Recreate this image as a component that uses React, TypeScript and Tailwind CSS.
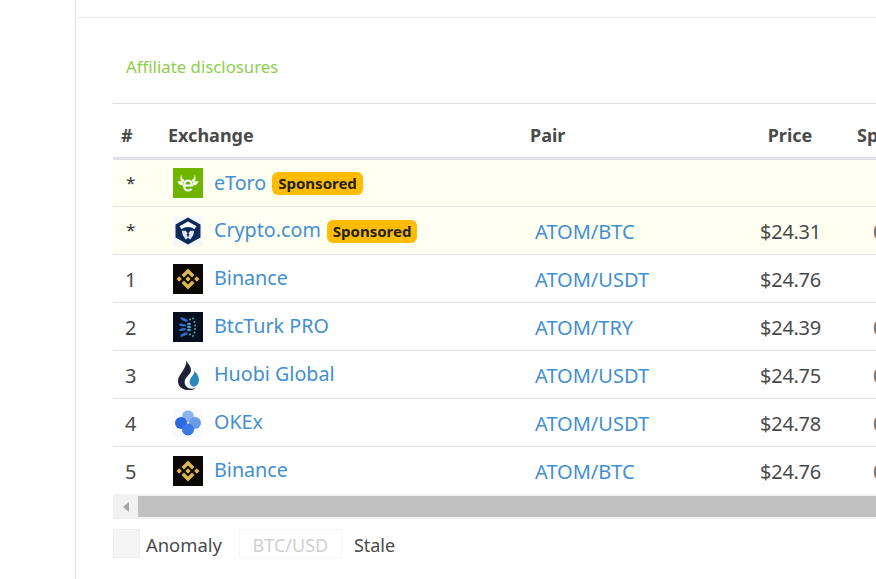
import React from "react";

const Etoro = () => (
  <svg width="30" height="30" viewBox="0 0 30 30" className="block shrink-0">
    <rect width="30" height="30" fill="#6fb500" />
    <path d="M8.500 6.500c-.3 2.600.6 4.300 3 5.400l-1.300 2.300C7.300 13 6.300 10 8.500 6.500zM21.500 6.500c.3 2.600-.6 4.300-3 5.400l1.300 2.300c2.900-1.200 3.900-4.200 1.700-7.700z" fill="#eef8e0" />
    <path d="M4.500 13.500c2-.9 4-.7 5.500.6v3.400c-2.500.2-4.500-1.400-5.500-4zM25.500 13.500c-2-.9-4-.7-5.500.6v3.400c2.500.2 4.500-1.400 5.500-4z" fill="#f4fbe9" />
    <path d="M11.200 17.500h7.600c0-3-1.500-5-3.800-5s-3.800 2-3.800 5 1.600 5 3.900 5c1.400 0 2.600-.6 3.400-1.700" fill="none" stroke="#fff" strokeWidth="2.200" />
  </svg>
);

const Crypto = () => (
  <svg width="30" height="30" viewBox="0 0 30 30" className="block shrink-0">
    <rect width="30" height="30" fill="#f6f8fc" />
    <path d="M15 1.500L27.500 8.500v13L15 28.500 2.500 21.500v-13z" fill="#0c2a5b" />
    <path d="M15 5.500l8.500 4.800-2.200 3c-1.600-1.500-3.700-2.300-6.300-2.300s-4.700.8-6.300 2.300l-2.200-3z" fill="#fff" />
    <path d="M8.800 14.800h3.800l2 2.400-1 1.300 1.600 3.300-2.500 1.800-3-4.500zM21.200 14.800h-3.800l-2 2.400 1 1.300-1.600 3.300 2.500 1.800 3-4.500z" fill="#dfe6f3" />
  </svg>
);

const Binance = () => (
  <svg width="30" height="30" viewBox="0 0 30 30" className="block shrink-0">
    <rect width="30" height="30" fill="#0b0805" />
    <g fill="#dcb554">
      <path d="M15 4.500l6.500 6.500-2.500 2.500L15 9.500l-4 4L8.500 11z" />
      <path d="M15 25.500L8.500 19l2.500-2.500 4 4 4-4 2.500 2.500z" />
      <rect x="4.300" y="13.100" width="3.800" height="3.800" transform="rotate(45 6.200 15)" />
      <rect x="21.900" y="13.100" width="3.800" height="3.800" transform="rotate(45 23.800 15)" />
      <rect x="13.100" y="13.100" width="3.800" height="3.800" transform="rotate(45 15 15)" />
    </g>
  </svg>
);

const BtcTurk = () => (
  <svg width="30" height="30" viewBox="0 0 30 30" className="block shrink-0">
    <rect width="30" height="30" fill="#08101f" />
    <g fill="#2c6fd0">
      <ellipse cx="11" cy="7.500" rx="4" ry="1.400" transform="rotate(25 11 7.500)" />
      <ellipse cx="11" cy="22.500" rx="4" ry="1.400" transform="rotate(-25 11 22.500)" />
      <ellipse cx="9.500" cy="13" rx="3.500" ry="1.400" transform="rotate(12 9.500 13)" />
      <ellipse cx="9.500" cy="17.500" rx="3.500" ry="1.400" transform="rotate(-12 9.500 17.500)" />
    </g>
    <g fill="#37a6cf">
      <ellipse cx="16" cy="12" rx="2" ry="1.200" />
      <ellipse cx="16" cy="15" rx="2" ry="1.200" />
      <ellipse cx="16" cy="18" rx="2" ry="1.200" />
      <circle cx="17" cy="7.500" r="1" />
      <circle cx="17" cy="22.500" r="1" />
    </g>
    <g fill="#3ec0b4">
      <circle cx="20" cy="6.500" r=".9" />
      <circle cx="21.500" cy="10" r=".9" />
      <circle cx="22" cy="13.500" r=".9" />
      <circle cx="22" cy="17" r=".9" />
      <circle cx="21.500" cy="20.500" r=".9" />
      <circle cx="20" cy="24" r=".9" />
    </g>
  </svg>
);

const Huobi = () => (
  <svg width="30" height="30" viewBox="0 0 30 30" className="block shrink-0">
    <rect width="30" height="30" fill="#fff" />
    <path d="M13.500 0c.5 3.500 4.500 5.500 4.500 10 0 4-4.500 6-6 10-1 3 0 6 3 8 2.500 1.200 5.500 1 8-.5-1.500 2-4.500 3-7.500 2.800C9.500 30 5 26.500 5 21c0-7 8.500-11 8.500-21z" fill="#1b2138" />
    <path d="M21.500 11c2.500 2.500 4.500 5.500 4.500 9 0 3.800-2.400 6.200-5.500 6.800-2.500-.6-4.200-2.700-3.900-5.500.4-3.700 4.500-5.800 4.900-10.300z" fill="#2a86bd" />
  </svg>
);

const Okex = () => (
  <svg width="30" height="30" viewBox="0 0 30 30" className="block shrink-0">
    <rect width="30" height="30" fill="#f8fafe" />
    <circle cx="15" cy="8.500" r="6" fill="#8db4ef" />
    <circle cx="22" cy="15" r="6" fill="#6a9bea" />
    <circle cx="8" cy="15" r="6" fill="#2a68e0" />
    <circle cx="15" cy="21.500" r="6" fill="#3c78e4" />
  </svg>
);

const Sponsored = () => (
  <span className="ml-[6px] inline-flex h-[23px] translate-y-[1px] items-center rounded-[6px] bg-[#ffbc00] px-[6px] text-[15px] font-bold text-[#212121]">
    Sponsored
  </span>
);

type Row = { rank: string; icon: React.ReactNode; name: string; sponsored?: boolean; pair?: string; price?: string; spread?: string };

const rows: Row[] = [
  { rank: "*", icon: <Etoro />, name: "eToro", sponsored: true },
  { rank: "*", icon: <Crypto />, name: "Crypto.com", sponsored: true, pair: "ATOM/BTC", price: "$24.31", spread: "0" },
  { rank: "1", icon: <Binance />, name: "Binance", pair: "ATOM/USDT", price: "$24.76" },
  { rank: "2", icon: <BtcTurk />, name: "BtcTurk PRO", pair: "ATOM/TRY", price: "$24.39", spread: "0" },
  { rank: "3", icon: <Huobi />, name: "Huobi Global", pair: "ATOM/USDT", price: "$24.75", spread: "0" },
  { rank: "4", icon: <Okex />, name: "OKEx", pair: "ATOM/USDT", price: "$24.78", spread: "0" },
  { rank: "5", icon: <Binance />, name: "Binance", pair: "ATOM/BTC", price: "$24.76", spread: "0" },
];

export default function App() {
  return (
    <div className="flex h-[579px] w-[876px] overflow-hidden bg-white font-['Noto_Sans','Open_Sans',sans-serif] text-[#4a4a4a]">
      <aside className="w-[76px] shrink-0 border-r border-[#e2e2e2]" />
      <main className="flex min-w-0 flex-1 flex-col pl-px">
        <div className="h-[18px] shrink-0 border-b border-[#e8e8e8]" />
        <div className="flex min-w-0 flex-1 flex-col pl-[36px]">
          <div className="flex h-[86px] shrink-0 items-center border-b border-[#e2e2e2] pl-[13px] pt-[13px]">
            <a className="text-[16.8px] text-[#8ccf4d]">Affiliate disclosures</a>
          </div>
          <div className="overflow-hidden">
            <table className="w-[886px] table-fixed border-collapse">
              <colgroup>
                <col className="w-[47px]" />
                <col className="w-[362px]" />
                <col className="w-[209px]" />
                <col className="w-[118px]" />
                <col className="w-[150px]" />
              </colgroup>
              <thead>
                <tr className="h-[54px] border-b-[3px] border-[#dfdfe4] text-[18px] font-bold text-[#4a4a4a]">
                  <th className="px-2 pt-[10px] text-left font-bold">#</th>
                  <th className="px-2 pt-[10px] text-left font-bold">Exchange</th>
                  <th className="px-2 pt-[10px] text-left font-bold">Pair</th>
                  <th className="px-2 pt-[10px] text-center font-bold">Price</th>
                  <th className="px-2 pt-[10px] text-left font-bold">Spread</th>
                </tr>
              </thead>
              <tbody className="text-[20px]">
                {rows.map((r, i) => (
                  <tr
                    key={i}
                    className={`h-[48px] ${i < rows.length - 1 ? "border-b border-[#e2e2e2]" : ""} ${r.sponsored ? "bg-[#fffff2]" : ""}`}
                  >
                    <td className={r.rank === "*" ? "pl-[13px] align-middle text-[17px] text-[#363636]" : "pl-[12px] pt-[4px] align-middle"}>{r.rank}</td>
                    <td className="pl-[13px] align-middle">
                      <div className="flex items-center">
                        <div className={i === 0 ? "" : "translate-y-[1px]"}>{r.icon}</div>
                        <a className="ml-[11px] text-[19.7px] text-[#428fd0]">{r.name}</a>
                        {r.sponsored && <Sponsored />}
                      </div>
                    </td>
                    <td className="pl-[13px] pt-[4px] align-middle text-[#428fd0]">{r.pair}</td>
                    <td className="pl-px pt-[4px] text-center align-middle tracking-[-0.3px]">{r.price}</td>
                    <td className="pl-[24px] pt-[4px] align-middle text-[#666666]">{r.spread}</td>
                  </tr>
                ))}
              </tbody>
            </table>
          </div>
          <div className="flex h-[25px] shrink-0 items-stretch bg-[#f1f1f1] py-[2px]">
            <div className="flex w-[25px] shrink-0 items-center justify-center">
              <div className="h-0 w-0 border-y-[5px] border-r-[6px] border-y-transparent border-r-[#a3a3a3]" />
            </div>
            <div className="flex-1 bg-[#c1c1c1]" />
          </div>
          <div className="mt-[10px] flex h-[29px] items-center text-[18px]">
            <div className="h-[29px] w-[27px] border border-[#eeeeee] bg-[#f5f5f5]" />
            <span className="ml-[6px] pt-[3px] text-[18.4px] text-[#4a4a4a]">Anomaly</span>
            <div className="ml-[17px] flex h-[29px] w-[103px] items-center justify-center border border-[#f5f5f5] pt-[3px] text-[#d0d0d0]">BTC/USD</div>
            <span className="ml-[12px] pt-[3px] text-[#4a4a4a]">Stale</span>
          </div>
        </div>
      </main>
    </div>
  );
}
